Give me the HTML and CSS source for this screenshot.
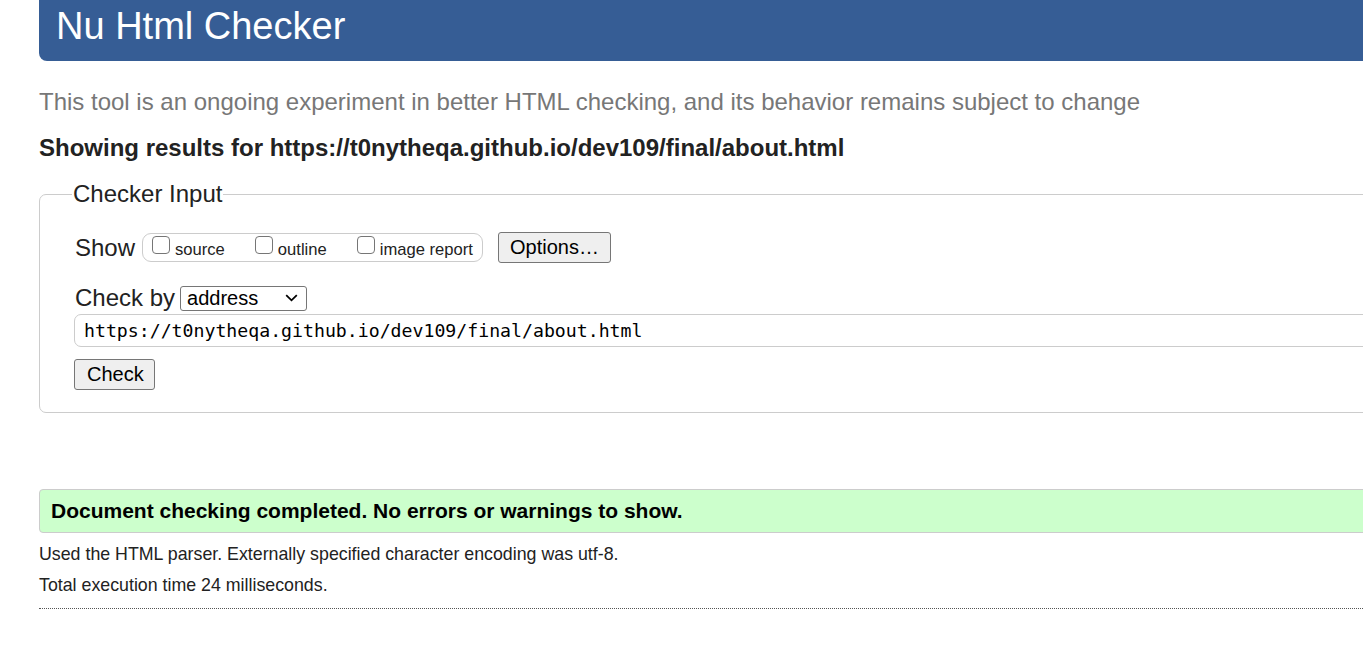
FILE: index.html
```html
<!DOCTYPE html>
<html>
<head>
<meta charset="utf-8">
<title>Nu Html Checker</title>
<link rel="stylesheet" href="styles.css">
</head>
<body>
<div class="page">
  <h1 class="banner">Nu Html Checker</h1>
  <p class="tagline">This tool is an ongoing experiment in better HTML checking, and its behavior remains subject to change</p>
  <p class="showing">Showing results for https://t0nytheqa.github.io/dev109/final/about.html</p>
  <fieldset class="input-box">
    <legend class="legend">Checker Input</legend>
    <div class="show-row">
      <span class="label">Show</span>
      <span class="group">
        <label class="opt"><span class="cb"></span>source</label>
        <label class="opt"><span class="cb"></span>outline</label>
        <label class="opt"><span class="cb"></span>image report</label>
      </span>
      <button class="btn btn-options">Options…</button>
    </div>
    <div class="by-row">
      <span class="label">Check by</span>
      <span class="select">address<svg class="chev" width="13" height="8" viewBox="0 0 13 8"><path d="M1.2 1.2 L6.5 6.3 L11.8 1.2" fill="none" stroke="#000" stroke-width="1.8"/></svg></span>
    </div>
    <div class="url">https://t0nytheqa.github.io/dev109/final/about.html</div>
    <button class="btn btn-check">Check</button>
  </fieldset>
  <div class="success">Document checking completed. No errors or warnings to show.</div>
  <p class="details">Used the HTML parser. Externally specified character encoding was utf-8.</p>
  <p class="details">Total execution time 24 milliseconds.</p>
  <hr class="dots">
</div>
</body>
</html>
```
FILE: styles.css
```css
html, body {
  margin: 0;
  padding: 0;
  overflow: hidden;
  background: #fff;
}
body {
  font-family: "Liberation Sans", Arial, sans-serif;
  color: #222;
}
.page {
  margin-left: 39px;
  width: 1400px;
}
.banner {
  margin: 0;
  height: 61px;
  background: #365d95;
  color: #fff;
  font-weight: normal;
  font-size: 38px;
  line-height: 52px;
  padding-left: 17px;
  border-bottom-left-radius: 8px;
  box-sizing: border-box;
}
.tagline {
  margin: 27px 0 0 0;
  font-size: 24px;
  line-height: 28px;
  color: #777;
}
.showing {
  margin: 18px 0 0 0;
  font-size: 24px;
  line-height: 28px;
  font-weight: bold;
  color: #222;
}
.input-box {
  margin: 18px 0 0 0;
  border: 1px solid #ccc;
  border-radius: 7px 0 0 7px;
  padding: 10px 0 22px 35px;
  min-width: 0;
}
.legend {
  font-size: 24px;
  line-height: 28px;
  padding: 0 1px;
  margin-left: -3px;
  color: #222;
}
.show-row {
  display: flex;
  align-items: center;
  height: 31px;
  margin-top: 14px;
}
.label {
  font-size: 24px;
  line-height: 28px;
  color: #222;
}
.group {
  display: inline-flex;
  align-items: center;
  margin-left: 7px;
  height: 29px;
  box-sizing: border-box;
  border: 1px solid #ccc;
  border-radius: 9px;
  padding: 0 9px 0 9px;
  font-size: 16.6px;
  gap: 30px;
}
.opt {
  display: inline-flex;
  align-items: center;
  color: #222;
  padding-top: 4px;
}
.cb {
  display: inline-block;
  width: 18px;
  height: 18px;
  box-sizing: border-box;
  border: 1px solid #767676;
  border-radius: 4px;
  margin-right: 5px;
  margin-top: -9px;
  background: #fff;
}
.btn {
  font-family: "Liberation Sans", Arial, sans-serif;
  font-size: 20px;
  background: #efefef;
  border: 1px solid #767676;
  border-radius: 3px;
  color: #000;
  padding: 0 12px;
  height: 31px;
}
.btn-options {
  margin-left: 15px;
  width: 113px;
  padding: 0;
}
.by-row {
  display: flex;
  align-items: center;
  height: 28px;
  margin-top: 21px;
}
.select {
  display: inline-flex;
  align-items: center;
  justify-content: space-between;
  margin-left: 5px;
  width: 127px;
  height: 25px;
  box-sizing: border-box;
  border: 1px solid #767676;
  border-radius: 3px;
  padding: 0 8px 0 6px;
  font-size: 20px;
  color: #000;
}
.url {
  margin: 2px 0 0 -1px;
  height: 33px;
  box-sizing: border-box;
  border: 1px solid #ccc;
  border-radius: 7px 0 0 7px;
  padding-left: 9px;
  font-family: "DejaVu Sans Mono", "Liberation Mono", monospace;
  font-size: 18.2px;
  line-height: 31px;
  color: #000;
}
.btn-check {
  margin: 12px 0 0 -1px;
  display: block;
  padding: 0 12px;
  width: 81px;
}
.success {
  margin-top: 76px;
  height: 44px;
  box-sizing: border-box;
  background: #ccffcc;
  border: 1px solid #ccc;
  border-radius: 4px 0 0 4px;
  padding-left: 11px;
  font-size: 21px;
  font-weight: bold;
  line-height: 42px;
  color: #000;
}
.details {
  margin: 11px 0 0 0;
  font-size: 17.8px;
  line-height: 21px;
  color: #222;
}
.details + .details {
  margin-top: 10px;
}
.dots {
  margin: 12px 0 0 0;
  border: 0;
  border-top: 1px dotted #555;
  height: 0;
}
```
